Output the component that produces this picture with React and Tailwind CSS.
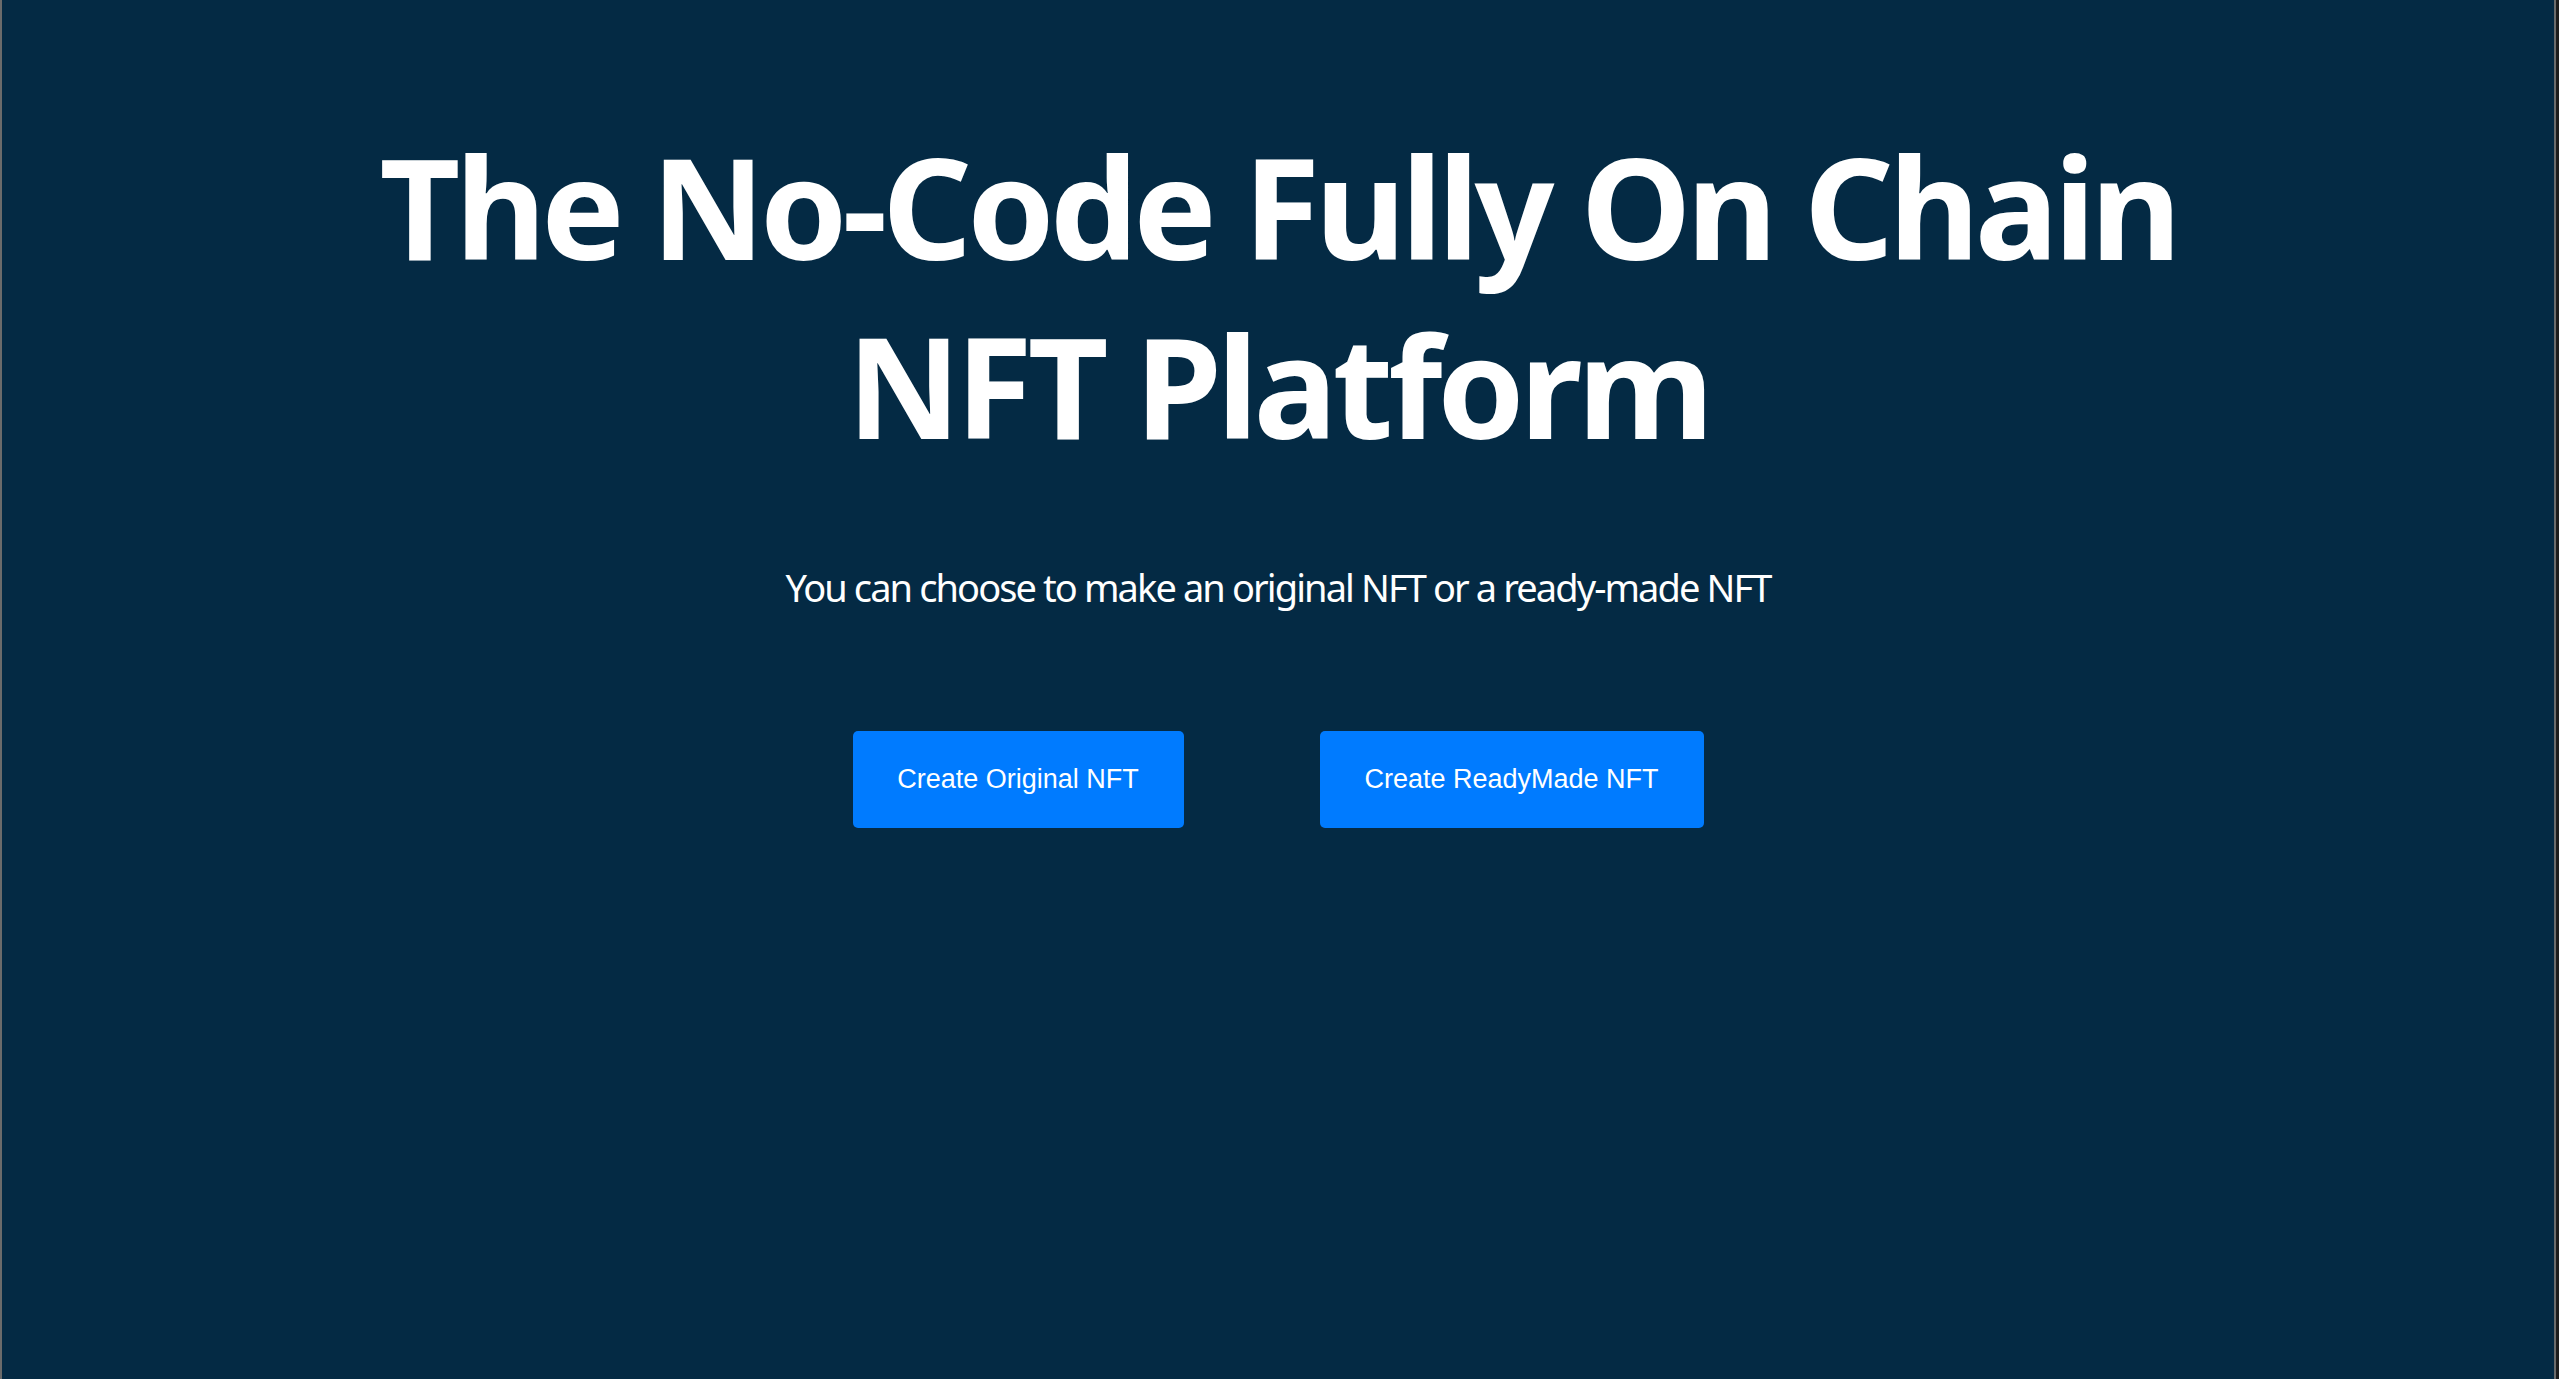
export default function App() {
  return (
    <div className="h-[1379px] w-full flex bg-[#1c1c1c]">
      <div className="flex-1 h-full bg-[#042a44] border-l-2 border-[#6b6b6b] border-r-2 flex flex-col items-center" style={{ fontFamily: '"Noto Sans", sans-serif' }}>
        <h1 className="mt-[116px] text-[140px] leading-[179px] tracking-[-5px] font-bold text-white text-center">
          The No-Code Fully On Chain
          <br />
          NFT Platform
        </h1>
        <p className="mt-[85px] text-[38px] leading-[57px] tracking-[-1.9px] text-white">You can choose to make an original NFT or a ready-made NFT</p>
        <div className="mt-[115px] flex gap-[136px]" style={{ fontFamily: '"Liberation Sans", Arial, sans-serif' }}>
          <button className="h-[97px] w-[331px] rounded-[5px] bg-[#007bff] text-white text-[27px]">Create Original NFT</button>
          <button className="h-[97px] w-[384px] rounded-[5px] bg-[#007bff] text-white text-[27px]">Create ReadyMade NFT</button>
        </div>
      </div>
      <div className="w-[3px] h-full bg-[#1c1c1c]"></div>
    </div>
  );
}
